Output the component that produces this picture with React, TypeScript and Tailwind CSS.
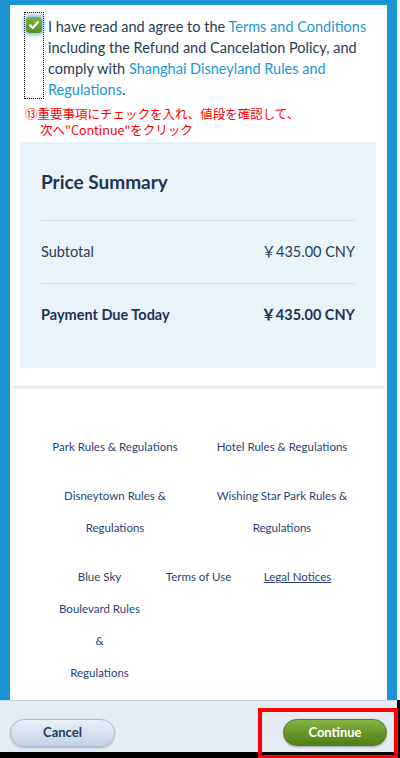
import React from 'react'

const font = { fontFamily: 'Lato, "Noto Sans", "Noto Sans CJK JP", sans-serif' }

function Checkbox() {
  return (
    <div className="w-[20px] h-[87px] shrink-0 border border-dotted border-black flex justify-center pt-[4px]">
      <div className="w-[16px] h-[16px] rounded-[3px] bg-gradient-to-b from-[#82b545] to-[#5a8e1f] shadow-[0_0_4px_2px_rgba(80,160,225,0.7)] flex items-center justify-center">
        <svg width="12" height="12" viewBox="0 0 12 12">
          <path d="M2.2 6.4 L4.8 9 L9.8 3.2" fill="none" stroke="#fff" strokeWidth="2.2" strokeLinecap="round" strokeLinejoin="round" />
        </svg>
      </div>
    </div>
  )
}

function FooterLink({ lines, underline }: { lines: string[]; underline?: boolean }) {
  return (
    <div className="text-center text-[11.5px] leading-[32px] text-[#2b3f72]">
      {lines.map(l => <span key={l} className={`block ${underline ? 'underline' : ''}`}>{l}</span>)}
    </div>
  )
}

export default function App() {
  return (
    <div className="w-[400px] h-[758px] bg-black overflow-hidden flex flex-col" style={font}>
      <div className="h-[700px] flex shrink-0">
        <div className="w-[397px] bg-[#1b93d5] pt-[5px] pl-[10px] pr-[10px]">
          <div className="bg-white h-[695px] overflow-hidden">
            <div className="flex gap-[4px] pl-[14px] pt-[7px] pr-[10px]">
              <Checkbox />
              <p className="text-[14.5px] leading-[21px] text-[#253b56] pt-[4px]">
                I have read and agree to the <span className="text-[#1f95d6]">Terms and Conditions</span> including the Refund and Cancelation Policy, and comply with <span className="text-[#1f95d6]">Shanghai Disneyland Rules and Regulations</span>.
              </p>
            </div>
            <div className="pl-[15px] pt-[6px] text-[12.5px] leading-[16px] text-[#ff0000]" style={{ fontFamily: '"Noto Sans CJK JP", sans-serif' }}>
              <p>⑬重要事項にチェックを入れ、値段を確認して、</p>
              <p className="pl-[15px]">次へ"Continue"をクリック</p>
            </div>

            <div className="ml-[10px] mr-[11px] mt-[4px] bg-[#e8f4fa] px-[21px] pt-[28px] pb-[22px]">
              <h2 className="text-[19px] leading-[24px] font-bold text-[#1d3352]">Price Summary</h2>
              <div className="mt-[26px] border-t border-[#d6d9e2]" />
              <div className="h-[62px] flex items-center justify-between text-[14.5px] text-[#253b56]">
                <span>Subtotal</span>
                <span>￥435.00 CNY</span>
              </div>
              <div className="border-t border-[#d6d9e2]" />
              <div className="h-[62px] flex items-center justify-between text-[14.5px] font-bold text-[#1d3352]">
                <span>Payment Due Today</span>
                <span>￥435.00 CNY</span>
              </div>
            </div>

            <div className="mt-[18px] mx-[3px] h-[4px] bg-gradient-to-b from-[#e6e6e6] to-white" />

            <div className="mt-[41px] mx-auto w-[334px] grid grid-cols-2 gap-y-[17px]">
              <FooterLink lines={['Park Rules & Regulations']} />
              <FooterLink lines={['Hotel Rules & Regulations']} />
              <FooterLink lines={['Disneytown Rules &', 'Regulations']} />
              <FooterLink lines={['Wishing Star Park Rules &', 'Regulations']} />
            </div>
            <div className="mt-[17px] mx-auto w-[297px] grid grid-cols-3">
              <FooterLink lines={['Blue Sky', 'Boulevard Rules', '&', 'Regulations']} />
              <FooterLink lines={['Terms of Use']} />
              <FooterLink lines={['Legal Notices']} underline />
            </div>
          </div>
        </div>
        <div className="w-[3px] bg-[#eef5fb]" />
      </div>

      <div className="relative w-[397px] h-[52px] bg-[#e5ecf4] border-t border-[#cdd6e0] flex justify-between items-start pt-[18px] pl-[10px] pr-[10px]">
        <button className="w-[105px] h-[28px] rounded-full border border-[#a9bbd0] bg-gradient-to-b from-[#e9f0f7] to-[#c3d2e3] shadow-[0_1px_2px_rgba(0,0,0,0.25)] text-[13px] font-bold text-[#253b56]">
          Cancel
        </button>
        <button className="w-[104px] h-[27px] rounded-full border border-[#4d7a1a] bg-gradient-to-b from-[#86b444] via-[#68982a] to-[#4f7f17] shadow-[0_1px_2px_rgba(0,0,0,0.3)] text-[13px] font-bold text-white">
          Continue
        </button>
        <div className="absolute left-[258px] top-[7px] w-[140px] h-[51px] border-[4px] border-[#ff0000]" />
      </div>
    </div>
  )
}
